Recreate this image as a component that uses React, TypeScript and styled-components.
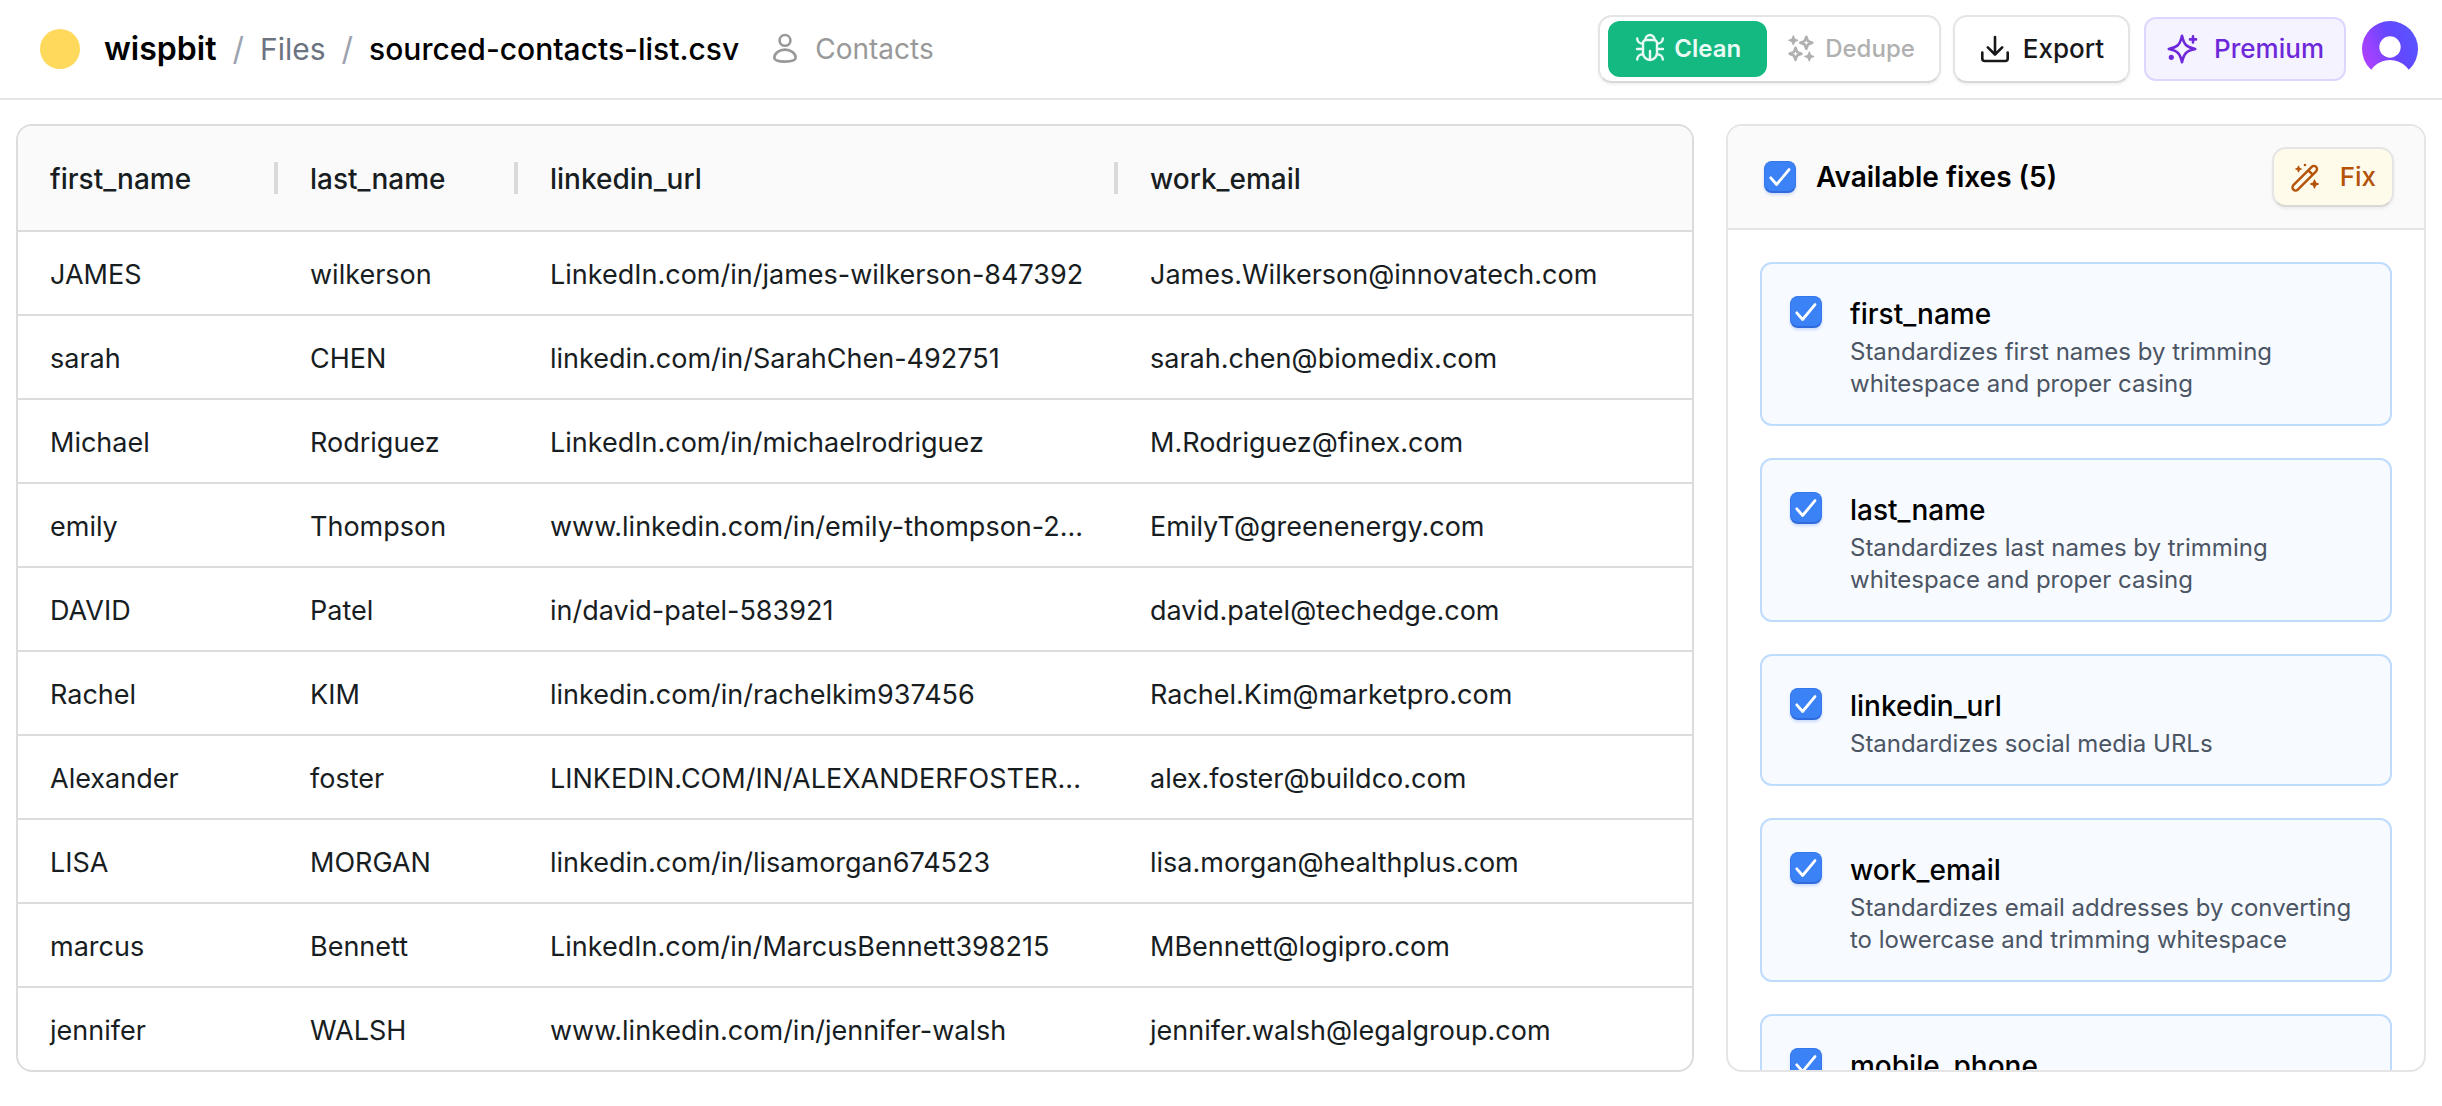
import React from "react";
import styled, { createGlobalStyle, css } from "styled-components";

const GlobalStyle = createGlobalStyle`
  *, *::before, *::after { box-sizing: border-box; }
  body {
    margin: 0;
    background: #fff;
    color: #000;
    font-family: Inter, "Liberation Sans", sans-serif;
    font-size: 28px;
    line-height: 40px;
  }
  button, input { font: inherit; }
`;

const Page = styled.div`
  display: flex;
  flex-direction: column;
  height: 100vh;
`;

const TopBar = styled.header`
  display: flex;
  align-items: center;
  justify-content: space-between;
  height: 100px;
  flex: none;
  padding: 0 24px 0 40px;
  border-bottom: 2px solid #e5e5e5;
`;

const Trail = styled.nav`
  display: flex;
  align-items: center;
  font-size: 30px;
`;

const Logo = styled.span`
  width: 40px;
  height: 40px;
  margin-right: 24px;
  border-radius: 50%;
  background: #ffd95c;
`;

const Brand = styled.a`
  color: #000;
  font-size: 32px;
  font-weight: 600;
  text-decoration: none;
`;

const FolderLink = styled.a`
  color: #6b7280;
  text-decoration: none;
`;

const Slash = styled.span`
  margin: 0 16px;
  color: #9ca3af;
  font-size: 32px;
`;

const FileName = styled.span`
  font-weight: 500;
`;

const Kind = styled.span`
  display: flex;
  align-items: center;
  gap: 16px;
  margin-left: 32px;
  color: #999;
  font-size: 28px;
`;

const Actions = styled.div`
  display: flex;
  align-items: center;
  gap: 12px;
`;

const raised = css`
  border: 2px solid #e5e5e5;
  border-bottom-color: #d8d8d8;
  border-radius: 14px;
  box-shadow: 0 2px 3px rgba(0, 0, 0, 0.06);
`;

const ModeGroup = styled.div`
  ${raised}
  display: flex;
  gap: 4px;
  height: 68px;
  padding: 4px 8px;
  background: #fff;
`;

const ModeButton = styled.button<{ $active?: boolean }>`
  display: flex;
  align-items: center;
  gap: ${(p) => (p.$active ? 8 : 10)}px;
  height: 56px;
  padding: 0 ${(p) => (p.$active ? 26 : 16)}px;
  border: 0;
  border-radius: 12px;
  background: ${(p) => (p.$active ? "#14b881" : "transparent")};
  color: ${(p) => (p.$active ? "#e9fbf4" : "#b0b0b0")};
  font-size: 24px;
  font-weight: ${(p) => (p.$active ? 600 : 500)};
`;

const ExportButton = styled.button`
  ${raised}
  display: flex;
  align-items: center;
  gap: 12px;
  height: 68px;
  padding: 0 24px;
  background: #fff;
  color: #18181b;
  font-size: 26px;
  font-weight: 500;
`;

const PremiumButton = styled.button`
  display: flex;
  align-items: center;
  gap: 16px;
  height: 64px;
  margin-left: 2px;
  padding: 0 20px;
  border: 2px solid #ddd6fe;
  border-radius: 12px;
  background: #f5f3ff;
  color: #6d28d9;
  font-size: 26px;
  font-weight: 500;
`;

const AvatarButton = styled.button`
  display: flex;
  margin-left: 4px;
  padding: 0;
  border: 0;
  background: none;
`;

const Main = styled.main`
  display: flex;
  gap: 32px;
  flex: 1;
  min-height: 0;
  padding: 24px 16px 34px;
`;

const TablePanel = styled.section`
  flex: 1;
  min-width: 0;
  overflow: hidden;
  border: 2px solid #dcdcdc;
  border-radius: 16px;
`;

const Table = styled.table`
  width: 100%;
  table-layout: fixed;
  border-collapse: separate;
  border-spacing: 0;
  color: #181d1f;
`;

const HeadCell = styled.th<{ $width?: number }>`
  width: ${(p) => (p.$width ? `${p.$width}px` : "auto")};
  height: 106px;
  padding: 0;
  border-bottom: 2px solid #dcdcdc;
  background: #fafafa;
  font-weight: 500;
  text-align: left;
`;

const HeadLabel = styled.div<{ $divided: boolean }>`
  height: 32px;
  padding-left: 32px;
  border-right: ${(p) => (p.$divided ? "4px solid #d9d9d9" : "0")};
  line-height: 34px;
`;

const Cell = styled.td`
  height: 84px;
  padding: 4px 24px 0 32px;
  border-bottom: 2px solid #dcdcdc;
  overflow: hidden;
  font-size: 27px;
  text-overflow: ellipsis;
  white-space: nowrap;
`;

const FixPanel = styled.aside`
  display: flex;
  flex-direction: column;
  width: 700px;
  flex: none;
  overflow: hidden;
  border: 2px solid #e5e5e5;
  border-radius: 16px;
`;

const FixHeader = styled.div`
  display: flex;
  align-items: center;
  justify-content: space-between;
  height: 104px;
  flex: none;
  padding: 0 30px 0 36px;
  border-bottom: 2px solid #e5e5e5;
  background: #fafafa;
`;

const SelectAll = styled.label`
  display: flex;
  align-items: center;
  gap: 20px;
  font-weight: 600;
`;

const FixButton = styled.button`
  ${raised}
  display: flex;
  align-items: center;
  gap: 20px;
  height: 60px;
  padding: 0 16px;
  background: #fffbeb;
  color: #b45309;
  font-size: 26px;
  font-weight: 500;
`;

const FixList = styled.div`
  display: flex;
  flex-direction: column;
  gap: 32px;
  flex: 1;
  min-height: 0;
  overflow-y: auto;
  scrollbar-width: none;
  padding: 32px;
`;

const FixCard = styled.label`
  display: flex;
  gap: 28px;
  flex: none;
  padding: 32px 28px 24px;
  border: 2px solid #bfdbfe;
  border-radius: 12px;
  background: #f7faff;
`;

const FixTitle = styled.span`
  display: block;
  margin-bottom: 4px;
  font-weight: 500;
  line-height: 36px;
`;

const FixText = styled.span`
  display: block;
  color: #4b5563;
  font-size: 24px;
  line-height: 32px;
`;

const CheckWrap = styled.span`
  display: grid;
  width: 32px;
  height: 32px;
  flex: none;
  > * { grid-area: 1 / 1; }
`;

const CheckInput = styled.input`
  width: 32px;
  height: 32px;
  margin: 0;
  appearance: none;
  border: 1px solid #3576ea;
  border-bottom: 2px solid #2f6bdc;
  border-radius: 8px;
  background: #fff;
  box-shadow: 0 2px 3px rgba(37, 99, 235, 0.2);
  &:checked { background: #3b82f6; }
  &:not(:checked) + svg { visibility: hidden; }
`;

const CheckMark = styled.svg`
  pointer-events: none;
`;

function Checkbox({ name }: { name: string }) {
  return (
    <CheckWrap>
      <CheckInput type="checkbox" name={name} defaultChecked />
      <CheckMark width="32" height="32" viewBox="0 0 32 32" fill="none" stroke="#fff" strokeWidth="2.8" strokeLinecap="round" strokeLinejoin="round">
        <path d="M6.8 16.8 12.6 23.5 25 8.6" />
      </CheckMark>
    </CheckWrap>
  );
}

const PersonIcon = () => (
  <svg width="28" height="32" viewBox="0 0 28 32" fill="none" stroke="currentColor" strokeWidth="2.6">
    <circle cx="14" cy="7.400" r="5.4" />
    <path d="M14 16.600c6 0 10.700 4 10.700 8 0 3-4.700 4-10.700 4s-10.700-1-10.700-4c0-4 4.700-8 10.700-8Z" />
  </svg>
);

const BugIcon = () => (
  <svg width="32" height="32" viewBox="0 0 32 32" fill="none" stroke="currentColor" strokeWidth="2.4" strokeLinecap="round" strokeLinejoin="round">
    <path d="M11.5 7V6.500a4.500 4.500 0 0 1 9 0V7" />
    <path d="M12 7h8a3 3 0 0 1 3 3v10a7 7 0 0 1-14 0V10a3 3 0 0 1 3-3ZM16 18v9" />
    <path d="M3.200 5.500c0 3 2.300 5.200 5.800 5.200M28.800 5.500c0 3-2.300 5.200-5.800 5.200M9 16H3M23 16h6M9 21.300c-3.500 0-5.800 2.200-5.800 5.200M23 21.300c3.500 0 5.800 2.200 5.800 5.200" />
  </svg>
);

/* Four-pointed star centred on (x, y) with tips at radius r. */
const star = (x: number, y: number, r: number) => {
  const k = r * 0.28;
  return `M${x} ${y - r}L${x + k} ${y - k}L${x + r} ${y}L${x + k} ${y + k}L${x} ${y + r}L${x - k} ${y + k}L${x - r} ${y}L${x - k} ${y - k}Z`;
};

const SparkleGridIcon = () => (
  <svg width="28" height="28" viewBox="0 0 28 28" fill="none" stroke="currentColor" strokeWidth="2.6" strokeLinejoin="round">
    <path d={star(19.3, 7.8, 6)} />
    <path d={star(8.5, 18.8, 6)} />
    <path fill="currentColor" strokeWidth="1" d={star(6.3, 5.3, 4.8)} />
    <path fill="currentColor" strokeWidth="1" d={star(22.3, 21.5, 4.8)} />
  </svg>
);

const DownloadIcon = () => (
  <svg width="32" height="32" viewBox="0 0 32 32" fill="none" stroke="currentColor" strokeWidth="2.600" strokeLinecap="round" strokeLinejoin="round">
    <path d="M16 4v17M8.800 14.300l7.200 7.200 7.200-7.200M3.300 19.500v6a2.500 2.500 0 0 0 2.500 2.500h20.400a2.500 2.500 0 0 0 2.500-2.500v-6" />
  </svg>
);

const SparkleIcon = () => (
  <svg width="32" height="32" viewBox="0 0 32 32" fill="none" stroke="currentColor" strokeWidth="2.600" strokeLinejoin="round">
    <path d="M16 2.800c2 9 4.200 11.200 13.200 13.200-9 2-11.200 4.200-13.200 13.200-2-9-4.200-11.200-13.200-13.200 9-2 11.200-4.200 13.200-13.200Z" />
    <path strokeLinecap="round" d="M27 3.400v6M24 6.400h6" />
    <circle cx="5.300" cy="24.300" r="1.300" />
  </svg>
);

const WandIcon = () => (
  <svg width="30" height="30" viewBox="0 0 30 30" fill="none" stroke="currentColor" strokeWidth="2.400" strokeLinecap="round" strokeLinejoin="round">
    <path d="M3.400 23.200 21.700 4.900a3.100 3.100 0 0 1 4.400 4.400L7.800 27.600a3.100 3.100 0 0 1-4.400-4.400ZM18.300 8.300l4.400 4.400" />
    <path fill="currentColor" strokeWidth="1.200" d={star(8.5, 7, 2.8)} />
    <path fill="currentColor" strokeWidth="1.200" d={star(24.5, 22, 4)} />
    <circle cx="15" cy="3" r="0.600" strokeWidth="1.400" />
  </svg>
);

const Avatar = () => (
  <svg width="56" height="56" viewBox="0 0 56 56">
    <defs>
      <linearGradient id="avatarFill" x1="0" y1="0.750" x2="0.900" y2="0.350">
        <stop offset="0" stopColor="#b040ff" />
        <stop offset="0.300" stopColor="#9443ff" />
        <stop offset="0.650" stopColor="#6446ff" />
        <stop offset="1" stopColor="#5a52ff" />
      </linearGradient>
      <clipPath id="avatarClip">
        <circle cx="28" cy="28" r="28" />
      </clipPath>
    </defs>
    <g clipPath="url(#avatarClip)">
      <rect width="56" height="56" fill="url(#avatarFill)" />
    </g>
    <circle cx="28" cy="26" r="10.700" fill="#fff" />
    <circle cx="28" cy="62" r="23" fill="#fff" />
  </svg>
);

const columns = [
  { name: "first_name", width: 260 },
  { name: "last_name", width: 240 },
  { name: "linkedin_url", width: 600 },
  { name: "work_email" },
];

const rows = [
  ["JAMES", "wilkerson", "LinkedIn.com/in/james-wilkerson-847392", "James.Wilkerson@innovatech.com"],
  ["sarah", "CHEN", "linkedin.com/in/SarahChen-492751", "sarah.chen@biomedix.com"],
  ["Michael", "Rodriguez", "LinkedIn.com/in/michaelrodriguez", "M.Rodriguez@finex.com"],
  ["emily", "Thompson", "www.linkedin.com/in/emily-thompson-2...", "EmilyT@greenenergy.com"],
  ["DAVID", "Patel", "in/david-patel-583921", "david.patel@techedge.com"],
  ["Rachel", "KIM", "linkedin.com/in/rachelkim937456", "Rachel.Kim@marketpro.com"],
  ["Alexander", "foster", "LINKEDIN.COM/IN/ALEXANDERFOSTER...", "alex.foster@buildco.com"],
  ["LISA", "MORGAN", "linkedin.com/in/lisamorgan674523", "lisa.morgan@healthplus.com"],
  ["marcus", "Bennett", "LinkedIn.com/in/MarcusBennett398215", "MBennett@logipro.com"],
  ["jennifer", "WALSH", "www.linkedin.com/in/jennifer-walsh", "jennifer.walsh@legalgroup.com"],
];

const fixes = [
  { name: "first_name", text: "Standardizes first names by trimming whitespace and proper casing" },
  { name: "last_name", text: "Standardizes last names by trimming whitespace and proper casing" },
  { name: "linkedin_url", text: "Standardizes social media URLs" },
  { name: "work_email", text: "Standardizes email addresses by converting to lowercase and trimming whitespace" },
  { name: "mobile_phone", text: "" },
];

export default function App() {
  return (
    <Page>
      <GlobalStyle />
      <TopBar>
        <Trail>
          <Logo />
          <Brand href="#">wispbit</Brand>
          <Slash>/</Slash>
          <FolderLink href="#">Files</FolderLink>
          <Slash>/</Slash>
          <FileName>sourced-contacts-list.csv</FileName>
          <Kind>
            <PersonIcon />
            Contacts
          </Kind>
        </Trail>
        <Actions>
          <ModeGroup>
            <ModeButton type="button" $active>
              <BugIcon />
              Clean
            </ModeButton>
            <ModeButton type="button">
              <SparkleGridIcon />
              Dedupe
            </ModeButton>
          </ModeGroup>
          <ExportButton type="button">
            <DownloadIcon />
            Export
          </ExportButton>
          <PremiumButton type="button">
            <SparkleIcon />
            Premium
          </PremiumButton>
          <AvatarButton type="button" aria-label="Account">
            <Avatar />
          </AvatarButton>
        </Actions>
      </TopBar>
      <Main>
        <TablePanel>
          <Table>
            <thead>
              <tr>
                {columns.map((c, i) => (
                  <HeadCell key={c.name} $width={c.width}>
                    <HeadLabel $divided={i < columns.length - 1}>{c.name}</HeadLabel>
                  </HeadCell>
                ))}
              </tr>
            </thead>
            <tbody>
              {rows.map((row) => (
                <tr key={row[3]}>
                  {row.map((value) => (
                    <Cell key={value}>{value}</Cell>
                  ))}
                </tr>
              ))}
            </tbody>
          </Table>
        </TablePanel>
        <FixPanel>
          <FixHeader>
            <SelectAll>
              <Checkbox name="all" />
              Available fixes (5)
            </SelectAll>
            <FixButton type="button">
              <WandIcon />
              Fix
            </FixButton>
          </FixHeader>
          <FixList>
            {fixes.map((f) => (
              <FixCard key={f.name}>
                <Checkbox name={f.name} />
                <span>
                  <FixTitle>{f.name}</FixTitle>
                  {f.text && <FixText>{f.text}</FixText>}
                </span>
              </FixCard>
            ))}
          </FixList>
        </FixPanel>
      </Main>
    </Page>
  );
}
